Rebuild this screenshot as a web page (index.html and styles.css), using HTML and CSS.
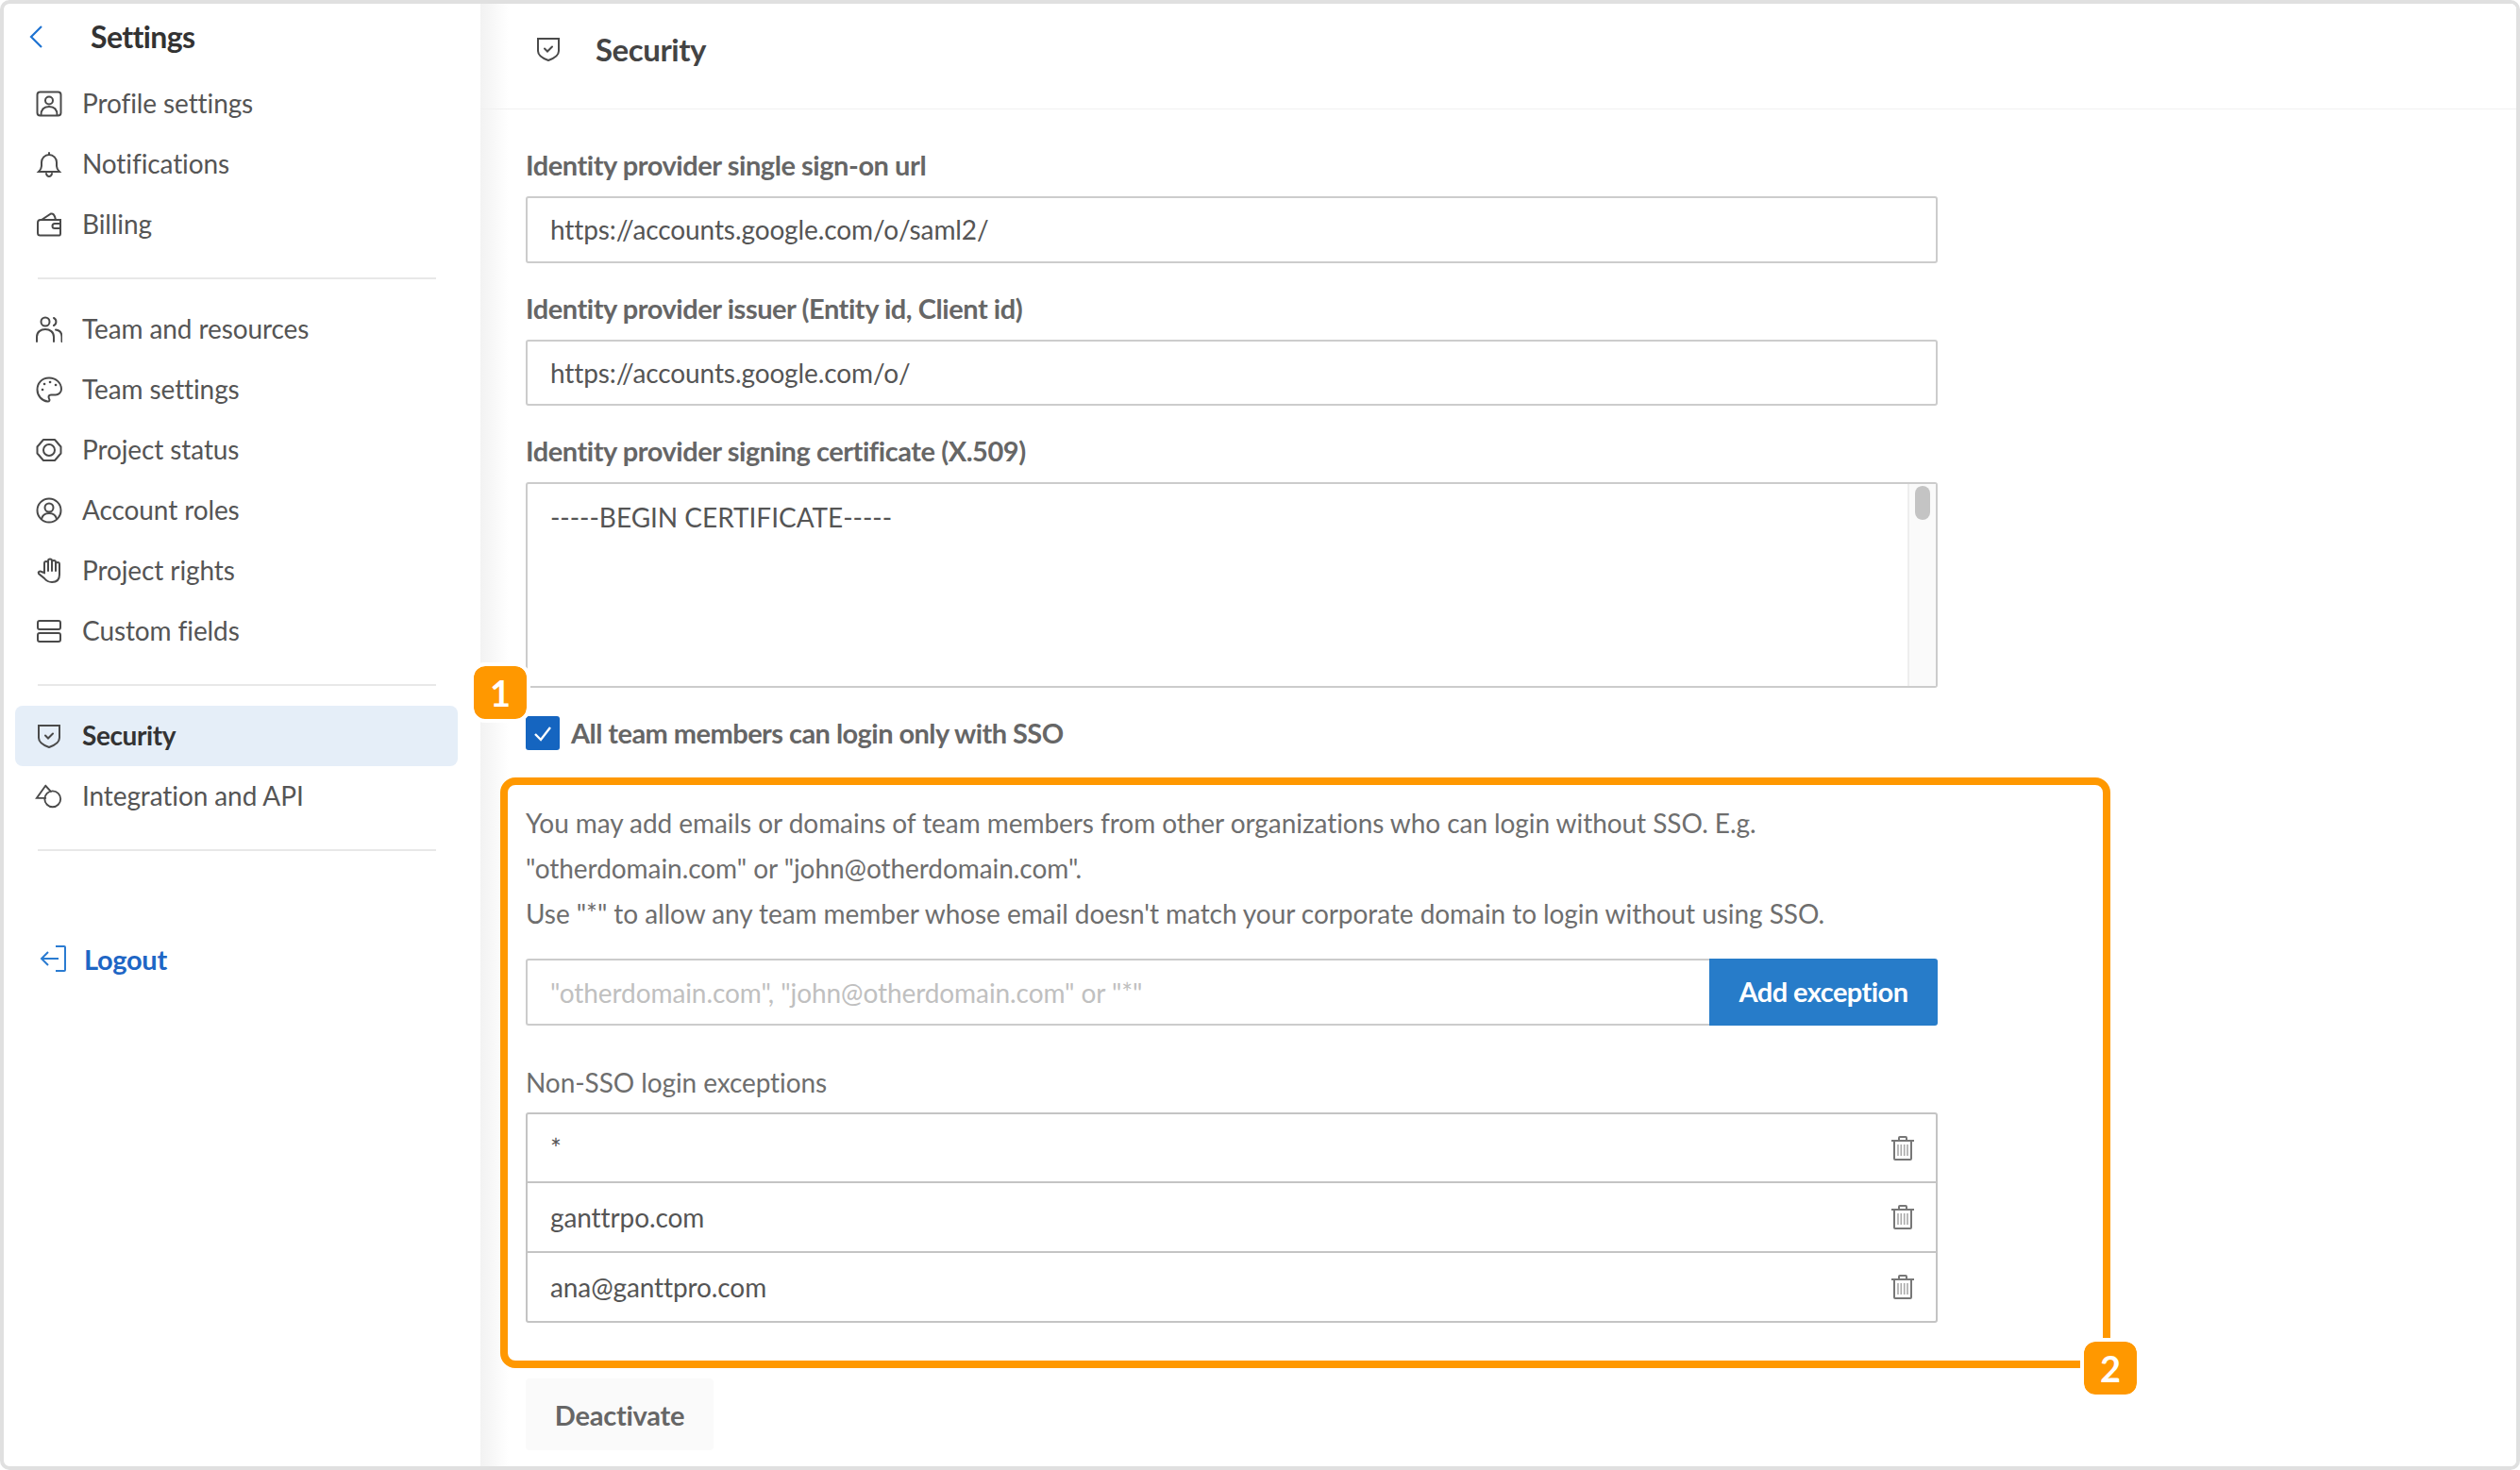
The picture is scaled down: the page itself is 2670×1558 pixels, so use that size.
FILE: index.html
```html
<!DOCTYPE html>
<html lang="en">
<head>
<meta charset="utf-8">
<title>Security settings</title>
<link rel="stylesheet" href="styles.css">
</head>
<body>
<div class="window">
  <aside class="sidebar">
    <div class="side-head">
      <svg class="back" viewBox="0 0 16 26"><path d="M14 2 3 13l11 11"/></svg>
      <span class="side-title">Settings</span>
    </div>
    <nav class="group">
      <a class="item"><svg class="ico" viewBox="0 0 28 28"><rect x="1.500" y="1.500" width="25" height="25" rx="3"/><circle cx="14" cy="10.500" r="4"/><path d="M5.500 26c0-6 3-9 8.500-9s8.500 3 8.500 9"/></svg><span>Profile settings</span></a>
      <a class="item"><svg class="ico" viewBox="0 0 28 28"><path d="M3 22c2-2 3-3.500 3-6v-4a8 8 0 0 1 16 0v4c0 2.500 1 4 3 6z"/><path d="M14 2v2M11 24c.5 2 1.500 3 3 3s2.500-1 3-3"/></svg><span>Notifications</span></a>
      <a class="item"><svg class="ico" viewBox="0 0 28 28"><path d="M26 9H5a3 3 0 0 0-3 3v11a2.500 2.500 0 0 0 2.500 2.500H25a1.500 1.500 0 0 0 1-1.500z"/><path d="M6 9l10-6.500c2-.5 4 1 5 6.500M26 13h-6a2.500 2.500 0 0 0 0 5h6"/></svg><span>Billing</span></a>
    </nav>
    <hr class="rule">
    <nav class="group">
      <a class="item"><svg class="ico" viewBox="0 0 28 28"><circle cx="10" cy="6" r="4.500"/><path d="M1 27v-5c0-5 4-8 9-8s9 3 9 8v5"/><path d="M19 2a4.500 4.500 0 0 1 0 8M21 14.500c4 .5 6.500 3.500 6.500 7.500v5"/></svg><span>Team and resources</span></a>
      <a class="item"><svg class="ico" viewBox="0 0 28 28"><path d="M14 1.500C6.500 1.500 1.500 7 1.500 14c0 6.500 5 12 11 12.500 2 0 2.500-1.500 1.500-3-1-2-.5-4 2-4h5c3 0 6-2.500 6-6C27 6.500 21 1.500 14 1.500z"/><path d="M7 14h.1M9 8h.1M15 6h.1M21 9h.1" class="dots"/></svg><span>Team settings</span></a>
      <a class="item"><svg class="ico" viewBox="0 0 28 28"><path d="M8 3h12l6.500 7.500v7L20 25H8l-6.500-7.500v-7z" stroke-linejoin="round"/><circle cx="14" cy="14" r="6"/></svg><span>Project status</span></a>
      <a class="item"><svg class="ico" viewBox="0 0 28 28"><circle cx="14" cy="14" r="12.500"/><circle cx="14" cy="11" r="4.500"/><path d="M6 23c1-4 4-6 8-6s7 2 8 6"/></svg><span>Account roles</span></a>
      <a class="item"><svg class="ico" viewBox="0 0 28 28"><path d="M9 16V6a2 2 0 0 1 4 0V3.500a2 2 0 0 1 4 0V5a2 2 0 0 1 4 0v2a2 2 0 0 1 4 0v11c0 5-3 8-8 8-4 0-6-1.500-8-4l-6-5c-1-1.500 1-3.500 3-2z"/><path d="M13 6v8M17 5v9M21 7v7"/></svg><span>Project rights</span></a>
      <a class="item"><svg class="ico" viewBox="0 0 28 28"><rect x="2" y="3" width="24" height="9" rx="2"/><rect x="2" y="16" width="24" height="9" rx="2"/></svg><span>Custom fields</span></a>
    </nav>
    <hr class="rule">
    <nav class="group">
      <a class="item active"><svg class="ico" viewBox="0 0 28 28"><path d="M3 3h22v13c0 4-4 7.500-11 10C7 23.500 3 20 3 16z"/><path d="M10 13.500l3 3 5-5"/></svg><span>Security</span></a>
      <a class="item"><svg class="ico wide" viewBox="0 0 32 28"><path d="M12 2 2 16h10M12 2l6 6.500"/><circle cx="20" cy="17" r="9"/></svg><span>Integration and API</span></a>
    </nav>
    <hr class="rule">
    <a class="logout"><svg class="logout-ico" viewBox="0 0 30 30"><path d="M17 2h9a1 1 0 0 1 1 1v24a1 1 0 0 1-1 1h-9M20 15H2M9 8l-7 7 7 7"/></svg><span>Logout</span></a>
  </aside>

  <main class="main">
    <header class="head">
      <svg class="head-ico" viewBox="0 0 28 28"><path d="M3 3h22v13c0 4-4 7.500-11 10C7 23.500 3 20 3 16z"/><path d="M10 13.500l3 3 5-5"/></svg>
      <h1 class="head-title">Security</h1>
    </header>
    <div class="form">
      <label class="lbl">Identity provider single sign-on url</label>
      <div class="field">https://accounts.google.com/o/saml2/</div>
      <label class="lbl">Identity provider issuer (Entity id, Client id)</label>
      <div class="field field-short">https://accounts.google.com/o/</div>
      <label class="lbl">Identity provider signing certificate (X.509)</label>
      <div class="area">
        <div class="area-text">-----BEGIN CERTIFICATE-----</div>
        <div class="track"><div class="thumb"></div></div>
      </div>
      <div class="check-row">
        <span class="badge badge-one">1</span>
        <span class="check"><svg viewBox="0 0 36 36"><path d="M10 19l6 6 10-13"/></svg></span>
        <span class="check-text">All team members can login only with SSO</span>
      </div>
      <section class="frame">
        <p class="para">You may add emails or domains of team members from other organizations who can login without SSO. E.g.<br>"otherdomain.com" or "john@otherdomain.com".<br>Use "*" to allow any team member whose email doesn't match your corporate domain to login without using SSO.</p>
        <div class="add">
          <div class="add-input">"otherdomain.com", "john@otherdomain.com" or "*"</div>
          <button class="add-btn">Add exception</button>
        </div>
        <div class="list-title">Non-SSO login exceptions</div>
        <div class="list">
          <div class="row"><span>*</span><svg class="trash" viewBox="0 0 24 26"><path d="M0 5h24M8 5V2a1 1 0 0 1 1-1h6a1 1 0 0 1 1 1v3M3 5v19a1 1 0 0 0 1 1h16a1 1 0 0 0 1-1V5"/><path class="bars" d="M7 9v12M10.300 9v12M13.700 9v12M17 9v12"/></svg></div>
          <div class="row"><span>ganttrpo.com</span><svg class="trash" viewBox="0 0 24 26"><path d="M0 5h24M8 5V2a1 1 0 0 1 1-1h6a1 1 0 0 1 1 1v3M3 5v19a1 1 0 0 0 1 1h16a1 1 0 0 0 1-1V5"/><path class="bars" d="M7 9v12M10.300 9v12M13.700 9v12M17 9v12"/></svg></div>
          <div class="row"><span>ana@ganttpro.com</span><svg class="trash" viewBox="0 0 24 26"><path d="M0 5h24M8 5V2a1 1 0 0 1 1-1h6a1 1 0 0 1 1 1v3M3 5v19a1 1 0 0 0 1 1h16a1 1 0 0 0 1-1V5"/><path class="bars" d="M7 9v12M10.300 9v12M13.700 9v12M17 9v12"/></svg></div>
        </div>
        <span class="badge badge-two">2</span>
      </section>
      <button class="deactivate">Deactivate</button>
    </div>
  </main>
</div>
</body>
</html>
```
FILE: styles.css
```css
* { box-sizing: border-box; }
html, body { margin: 0; padding: 0; background: #fff; }
body { font-family: Lato, "Liberation Sans", sans-serif; color: #555; }

.window {
  width: 2670px;
  height: 1558px;
  border: 4px solid #e0e0e0;
  border-radius: 10px;
  display: flex;
  overflow: hidden;
  background: #fff;
}

/* Sidebar */
.sidebar { width: 505px; flex: none; display: flex; flex-direction: column; }
.side-head { height: 74px; display: flex; align-items: center; padding-left: 26px; padding-bottom: 4px; }
.back { width: 16px; height: 26px; fill: none; stroke: #1e73d2; stroke-width: 2.2; }
.side-title { margin-left: 50px; font-size: 32px; font-weight: 700; letter-spacing: -0.6px; color: #333; line-height: 40px; }

.group { display: flex; flex-direction: column; margin: 0 24px 0 12px; }
.item {
  height: 64px;
  display: flex;
  align-items: center;
  padding-left: 22px;
  border-radius: 8px;
  font-size: 28px;
  letter-spacing: -0.1px;
  color: #555;
}
.item span { margin-left: 21px; padding-bottom: 2px; }
.active { background: #e5eef8; color: #333; font-weight: 700; letter-spacing: -0.4px; }
.ico { width: 28px; height: 28px; flex: none; fill: none; stroke: #4a4a4a; stroke-width: 2; stroke-linecap: round; }
.wide { width: 30px; margin-left: -1px; margin-right: -1px; }
.dots { stroke-width: 2.6; }
.rule { border: 0; height: 2px; background: #e8e8e8; margin: 24px 47px 21px 36px; flex: none; }

.logout { display: flex; align-items: center; margin: 61px 0 0 38px; height: 64px; font-size: 29px; font-weight: 700; letter-spacing: -0.3px; color: #1e66c5; }
.logout span { margin-left: 17px; }
.logout-ico { width: 30px; height: 30px; fill: none; stroke: #2a7bd1; stroke-width: 2; }

/* Main */
.main { flex: 1; min-width: 0; background: linear-gradient(to right, #f2f2f2 0, #fff 30px); }
.head { height: 112px; display: flex; align-items: center; border-bottom: 1px solid #f0f0f0; padding: 0 0 16px 58px; background: linear-gradient(to right, #f2f2f2 0, #fff 30px); }
.head-ico { width: 28px; height: 30px; fill: none; stroke: #4a4a4a; stroke-width: 2; stroke-linecap: round; }
.head-title { margin: 0 0 0 36px; font-size: 33px; font-weight: 700; letter-spacing: -0.45px; color: #444; }

.form { padding: 39px 0 0 48px; display: flex; flex-direction: column; align-items: flex-start; }
.lbl { height: 40px; line-height: 40px; font-size: 29px; font-weight: 700; letter-spacing: -0.45px; color: #666; margin-bottom: 13px; }
.field {
  width: 1496px;
  height: 71px;
  border: 2px solid #ccc;
  border-radius: 3px;
  padding-left: 24px;
  line-height: 67px;
  font-size: 28px;
  letter-spacing: -0.1px;
  color: #555;
  margin-bottom: 28px;
}
.field-short { height: 70px; line-height: 66px; }
.area { width: 1496px; height: 218px; border: 2px solid #ccc; border-radius: 3px; display: flex; }
.area-text { flex: 1; padding: 17px 0 0 24px; font-size: 28px; line-height: 36px; letter-spacing: -0.03px; color: #555; }
.track { width: 30px; background: #fafafa; border-left: 2px solid #eee; padding: 2px 0 0 6px; }
.thumb { width: 16px; height: 36px; border-radius: 8px; background: #c4c4c4; }

.check-row { position: relative; display: flex; align-items: center; height: 36px; margin-top: 30px; }
.check { width: 36px; height: 36px; border-radius: 3px; background: #1565c0; display: block; }
.check svg { display: block; width: 36px; height: 36px; fill: none; stroke: #fff; stroke-width: 2.4; }
.check-text { margin-left: 12px; padding-bottom: 2px; font-size: 29px; font-weight: 700; letter-spacing: -0.55px; color: #666; }

.badge {
  position: absolute;
  width: 64px;
  height: 64px;
  border: 4px solid #fff;
  border-radius: 16px;
  background: #ff9800;
  color: #fff;
  background-clip: padding-box;
  display: flex;
  align-items: center;
  justify-content: center;
  font-family: Lato, "Liberation Sans", sans-serif;
  font-size: 38px;
  font-weight: 700;
  z-index: 2;
}
.badge-one { left: -59px; top: -57px; }
.badge-two { right: -40px; bottom: -40px; }

.frame {
  position: relative;
  width: 1706px;
  margin: 29px 0 0 -27px;
  border: 8px solid #ff9800;
  border-radius: 16px;
  padding: 16px 0 40px 19px;
}
.para { margin: 0; font-size: 28px; line-height: 48px; letter-spacing: -0.06px; color: #6e6e6e; white-space: nowrap; }
.add { width: 1496px; height: 71px; display: flex; margin-top: 24px; }
.add-input { flex: 1; border: 2px solid #ccc; border-right: 0; border-radius: 3px 0 0 3px; padding: 1px 0 0 24px; line-height: 67px; font-size: 28px; letter-spacing: -0.08px; color: #c0c0c0; }
.add-btn { width: 242px; border: 0; border-radius: 0 3px 3px 0; background: #277cc9; color: #fff; font-family: inherit; font-size: 29px; font-weight: 700; letter-spacing: -0.55px; padding: 0 0 2px; }
.list-title { height: 40px; line-height: 40px; margin-top: 40px; font-size: 28px; color: #6e6e6e; letter-spacing: -0.08px; }
.list { width: 1496px; margin-top: 12px; border: 2px solid #c4c4c4; border-radius: 3px; }
.row { height: 74px; display: flex; align-items: center; justify-content: space-between; padding: 0 24px; border-top: 2px solid #c4c4c4; font-size: 28px; letter-spacing: -0.1px; color: #555; }
.row:first-child { height: 71px; padding-top: 1px; border-top: 0; }
.trash { width: 24px; height: 26px; flex: none; margin-right: -1px; fill: none; stroke: #777; stroke-width: 2; }
.bars { stroke: #aaa; stroke-width: 1.6; }

.deactivate { width: 199px; height: 76px; margin-top: 11px; border: 0; border-radius: 4px; background: #fafafa; font-family: inherit; font-size: 29px; font-weight: 700; letter-spacing: -0.25px; color: #666; padding: 0; }
```
